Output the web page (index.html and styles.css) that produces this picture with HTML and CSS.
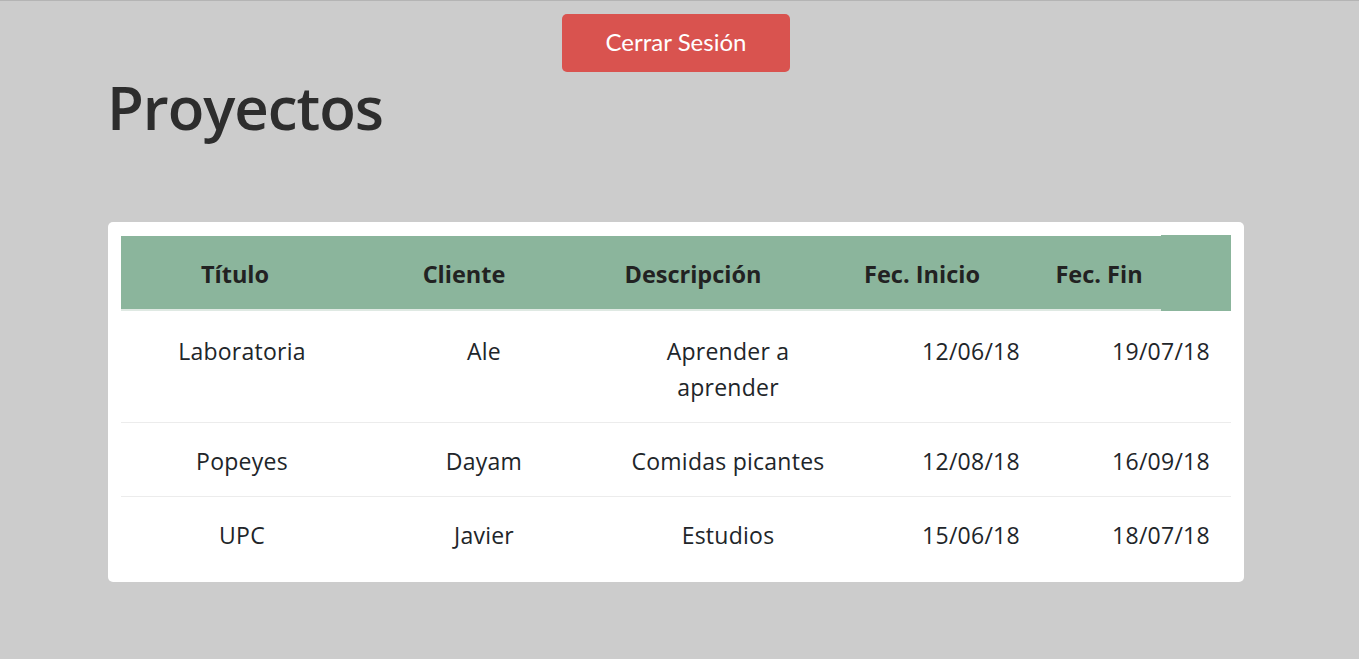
FILE: index.html
```html
<!DOCTYPE html>
<html lang="es">
<head>
<meta charset="utf-8">
<title>Proyectos</title>
<link rel="stylesheet" href="styles.css">
</head>
<body>
<div class="page">
  <div class="topbar">
    <button class="logout" type="button">Cerrar Sesión</button>
  </div>
  <h1 class="title">Proyectos</h1>
  <div class="card">
    <div class="thead">
      <div class="th-group">
        <div class="th">Título</div>
        <div class="th">Cliente</div>
        <div class="th">Descripción</div>
        <div class="th">Fec. Inicio</div>
        <div class="th">Fec. Fin</div>
      </div>
      <div class="th-extra"></div>
    </div>
    <div class="tr first">
      <div class="td">Laboratoria</div>
      <div class="td">Ale</div>
      <div class="td">Aprender a<br>aprender</div>
      <div class="td">12/06/18</div>
      <div class="td">19/07/18</div>
    </div>
    <div class="tr">
      <div class="td">Popeyes</div>
      <div class="td">Dayam</div>
      <div class="td">Comidas picantes</div>
      <div class="td">12/08/18</div>
      <div class="td">16/09/18</div>
    </div>
    <div class="tr last">
      <div class="td">UPC</div>
      <div class="td">Javier</div>
      <div class="td">Estudios</div>
      <div class="td">15/06/18</div>
      <div class="td">18/07/18</div>
    </div>
  </div>
</div>
</body>
</html>
```

FILE: styles.css
```css
html, body {
  margin: 0;
  padding: 0;
}
body {
  background: #cccccc;
  border-top: 1px solid #b4b4b4;
  font-family: "Open Sans", "Noto Sans", sans-serif;
  color: #212529;
  min-height: 658px;
}
.page {
  margin: 0 115px 0 108px;
  width: 1136px;
  padding-top: 13px;
}
.topbar {
  display: flex;
  justify-content: center;
}
.logout {
  width: 228px;
  height: 58px;
  background: #d9534f;
  color: #ffffff;
  border: none;
  border-radius: 5px;
  font-family: "Lato", "Open Sans", sans-serif;
  font-size: 24px;
  padding: 0 0 4px 0;
  cursor: pointer;
}
.title {
  margin: 5px 0 84px 0;
  font-size: 60px;
  line-height: 61px;
  font-weight: 600;
  letter-spacing: -1.05px;
  color: #2d2d2d;
  text-indent: -1px;
}
.card {
  background: #ffffff;
  border-radius: 5px;
  padding: 13px 13px 12px 13px;
}
.thead {
  display: flex;
  align-items: flex-end;
}
.th-group {
  display: grid;
  grid-template-columns: 228px 230px 228px 230px 124px;
  background: #8bb59c;
  border-bottom: 2px solid #dfe9e3;
}
.th {
  padding: 22px 0 19px 0;
  line-height: 32px;
  font-size: 23.5px;
  font-weight: 700;
  text-align: center;
  color: #222222;
}
.th-extra {
  width: 70px;
  height: 76px;
  background: #8bb59c;
}
.tr {
  display: grid;
  grid-template-columns: 242px 242px 246px 240px 140px;
  border-top: 1px solid #ececec;
}
.tr.first {
  border-top: none;
}
.td {
  padding: 20px 0 17px 0;
  font-size: 23px;
  letter-spacing: 0.25px;
  line-height: 36px;
  text-align: center;
  color: #212529;
}
.tr.first .td {
  padding-top: 22px;
}
```
